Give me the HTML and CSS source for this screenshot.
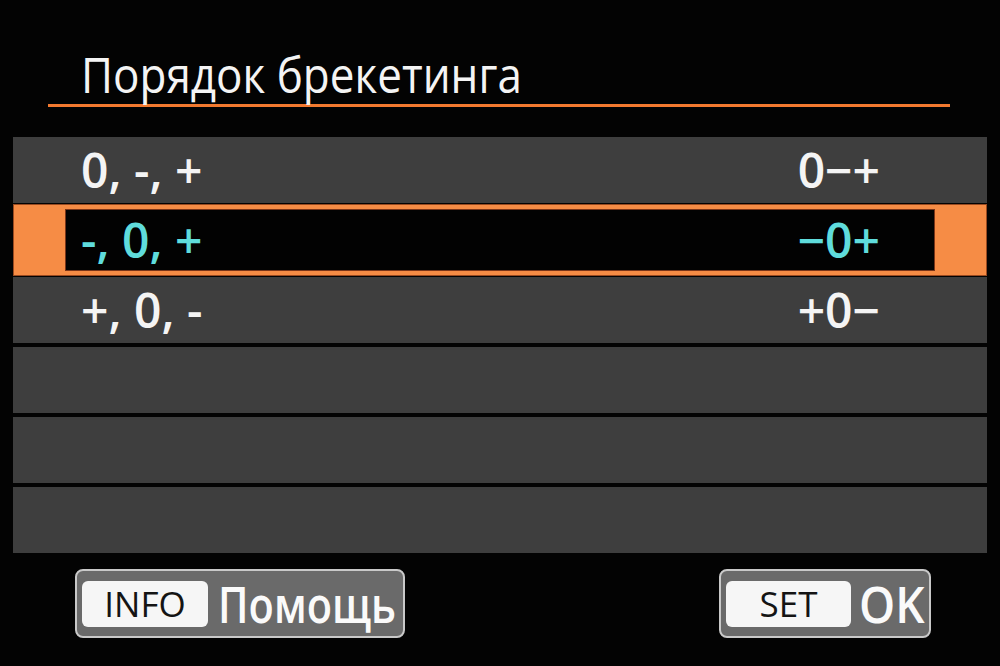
FILE: index.html
```html
<!DOCTYPE html>
<html lang="ru">
<head>
<meta charset="utf-8">
<title>Порядок брекетинга</title>
<link rel="stylesheet" href="styles.css">
</head>
<body>
<div class="screen">
  <header class="header">
    <h1 class="title"><span class="squeeze title-text">Порядок брекетинга</span></h1>
    <div class="rule"></div>
  </header>
  <div class="list">
    <div class="row"><span class="label">0, -, +</span><span class="code">0−+</span></div>
    <div class="row row-selected"><div class="row-inner"><span class="label">-, 0, +</span><span class="code">−0+</span></div></div>
    <div class="row"><span class="label">+, 0, -</span><span class="code">+0−</span></div>
    <div class="row"></div>
    <div class="row"></div>
    <div class="row"></div>
  </div>
  <footer class="footer">
    <div class="btn btn-info"><span class="key">INFO</span><span class="btn-text squeeze help-text">Помощь</span></div>
    <div class="btn btn-set"><span class="key">SET</span><span class="btn-text squeeze ok-text">OK</span></div>
  </footer>
</div>
</body>
</html>
```

FILE: styles.css
```css
html, body {
  margin: 0;
  padding: 0;
  background: #030303;
}
.screen {
  width: 1000px;
  height: 666px;
  overflow: hidden;
  font-family: "Open Sans", "Noto Sans", sans-serif;
  color: #f4f4f4;
  display: flex;
  flex-direction: column;
}
.squeeze {
  display: inline-block;
  transform-origin: 0 50%;
  white-space: nowrap;
}
.header {
  padding-top: 44px;
}
.title {
  margin: 0 0 0 81px;
  font-size: 50px;
  font-weight: 500;
  line-height: 60px;
  height: 60px;
}
.title-text {
  transform: scaleX(0.88);
}
.rule {
  margin-left: 48px;
  width: 902px;
  height: 3px;
  background: #f2792f;
}
.list {
  margin: 30px 13px 0 13px;
  display: flex;
  flex-direction: column;
  gap: 4px;
}
.row {
  height: 66px;
  background: #3e3e3e;
  display: flex;
  align-items: center;
  justify-content: space-between;
  padding: 0 107px 0 68px;
  font-size: 48px;
  font-weight: 600;
}
.row-selected {
  height: 72px;
  margin: -3px 0;
  background: #f68c45;
  box-shadow: inset 0 0 0 1px #9a4a20;
  padding: 6px 53px;
  box-sizing: border-box;
}
.row-inner {
  flex: 1;
  align-self: stretch;
  background: #020202;
  display: flex;
  align-items: center;
  justify-content: space-between;
  padding: 0 54px 0 15px;
  color: #5fdcdc;
  box-shadow: 0 0 0 1px #7a3518;
}
.label, .code {
  line-height: 1;
}
.footer {
  margin-top: 16px;
  padding: 0 69px 0 75px;
  display: flex;
  justify-content: space-between;
}
.btn {
  height: 69px;
  box-sizing: border-box;
  background: #6a6a6a;
  border: 2px solid #c9c9c9;
  border-radius: 8px;
  display: flex;
  align-items: center;
  padding: 0 8px 0 5px;
  gap: 10px;
  overflow: hidden;
}
.btn-info { width: 330px; }
.btn-set { width: 212px; gap: 8px; }
.key {
  flex-shrink: 0;
  background: #f6f6f6;
  color: #141414;
  border-radius: 6px;
  height: 46px;
  width: 126px;
  display: flex;
  align-items: center;
  justify-content: center;
  font-size: 35px;
  font-weight: 400;
}
.btn-set .key { width: 125px; }
.btn-text {
  flex-shrink: 0;
  font-size: 50px;
  font-weight: 600;
  color: #fafafa;
  line-height: 1;
}
.help-text {
  transform: scaleX(0.83);
}
.ok-text {
  transform: scaleX(0.92);
}
```
